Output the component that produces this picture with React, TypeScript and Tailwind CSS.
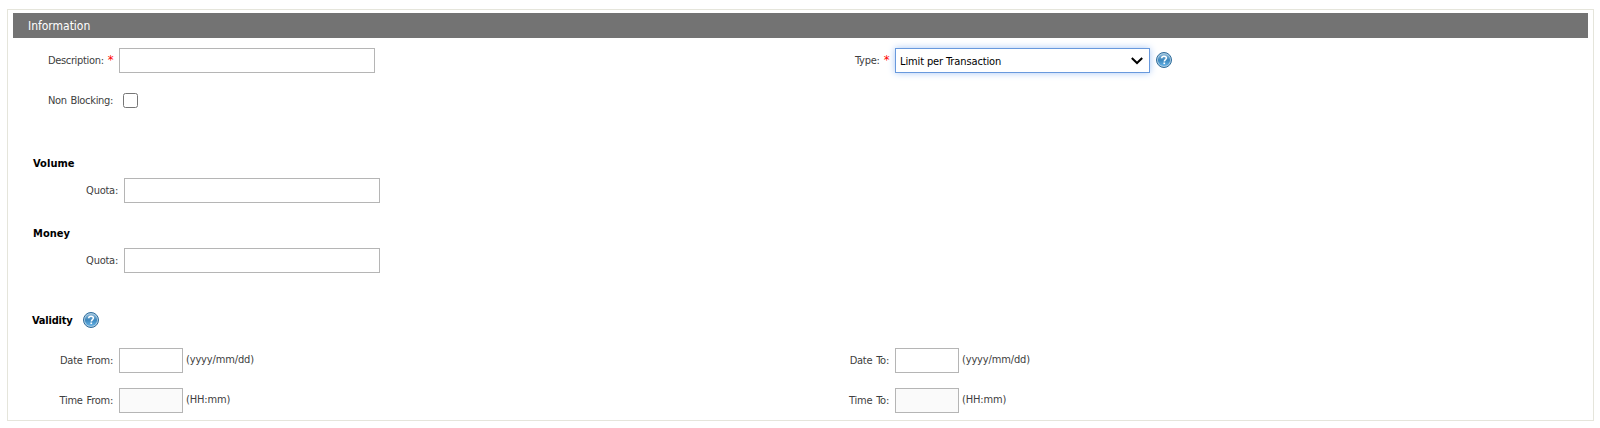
import type { ReactNode } from 'react';

function HelpIcon() {
  return (
    <svg width="16" height="16" viewBox="0 0 16 16" className="block shrink-0">
      <defs>
        <linearGradient id="help" x1="0" y1="0" x2="0" y2="1">
          <stop offset="0" stopColor="#8db9d8" />
          <stop offset="0.5" stopColor="#3c87bd" />
          <stop offset="1" stopColor="#62b1e6" />
        </linearGradient>
      </defs>
      <circle cx="8" cy="8" r="7.5" fill="#a9cbe2" stroke="#2f6c9b" />
      <circle cx="8" cy="8" r="6.1" fill="url(#help)" />
      <path d="M5.7 6.3C5.8 4.8 6.7 4.2 8 4.2c1.5 0 2.4.8 2.4 1.9C10.400 7.600 8.300 7.600 8.300 9.500" fill="none" stroke="#fff" strokeWidth="1.5" />
      <rect x="7.400" y="10.500" width="1.700" height="1.600" fill="#fff" />
    </svg>
  );
}

function Label({ className, children, required }: { className: string; children: ReactNode; required?: boolean }) {
  return (
    <div className={`flex shrink-0 justify-end whitespace-nowrap pr-1.5 leading-[25px] ${className}`}>
      {children}
      {required && <span className="ml-1 text-[13px] leading-[23px] tracking-[-0.5px] text-[#ff0000]">*</span>}
    </div>
  );
}

function Field({ className }: { className: string }) {
  return <input className={`block h-[25px] shrink-0 border border-[#b5b5b5] outline-none ${className}`} />;
}

function Range({ unit, labels, disabled }: { unit: string; labels: [string, string]; disabled?: boolean }) {
  const field = disabled ? 'w-16 bg-[#fafafa]' : 'w-16 bg-white';
  return (
    <div className="flex h-[25px]">
      <div className="flex w-[776px]">
        <Label className="w-[111px]">{labels[0]}</Label>
        <Field className={field} />
        <span className="ml-[3px] leading-6 tracking-[-0.15px]">{unit}</span>
      </div>
      <Label className="w-[111px]">{labels[1]}</Label>
      <Field className={field} />
      <span className="ml-[3px] leading-6 tracking-[-0.15px]">{unit}</span>
    </div>
  );
}

function Quota({ title }: { title: string }) {
  return (
    <section className="h-[70px]">
      <h3 className="ml-[25px] h-[25px] pt-1 text-[11px] leading-[14px] font-bold tracking-[0.05px] text-black">{title}</h3>
      <div className="flex">
        <Label className="w-[116px]">Quota:</Label>
        <Field className="w-64" />
      </div>
    </section>
  );
}

export default function App() {
  return (
    <main className="h-[428px] bg-white pt-[9px] pl-[7px] font-[family-name:'DejaVu_Sans',sans-serif] text-[11px] tracking-[-0.25px] text-[#404040] font-stretch-condensed [word-spacing:1px]">
      <div className="h-[412px] w-[1587px] border border-[#e5e5db] pt-[3px] pr-[5px]">
        <h2 className="ml-[5px] h-[25px] bg-[#737373] pl-[15px] text-[12px] leading-[26px] font-normal tracking-[-0.02px] text-white">Information</h2>
        <div className="mt-2.5 flex h-[25px]">
          <div className="flex w-[776px]">
            <Label className="w-[111px] tracking-[-0.33px]" required>Description:</Label>
            <Field className="w-64" />
          </div>
          <Label className="w-[111px]" required>Type:</Label>
          <button className="flex h-[25px] w-[255px] items-center justify-between border border-[#6899dd] bg-white pr-1.5 pl-1 text-black shadow-[0_0_7px_#a8c8f5]">
            <span className="pt-[3px] tracking-[-0.12px]">Limit per Transaction</span>
            <svg width="12" height="8" viewBox="0 0 12 8" fill="none" stroke="#000" strokeWidth="2"><path d="m.8 1 5.200 5 5.200-5" /></svg>
          </button>
          <div className="mt-1 ml-1.5"><HelpIcon /></div>
        </div>
        <div className="mt-[15px] flex h-[25px]">
          <Label className="w-[111px] tracking-[-0.32px]">Non Blocking:</Label>
          <input type="checkbox" className="mt-[5px] ml-1 h-[15px] w-[15px] appearance-none rounded-[2.5px] border border-[#767676]" />
        </div>
        <div className="mt-10">
          <Quota title="Volume" />
          <Quota title="Money" />
        </div>
        <div className="mt-[19px] ml-6 flex h-4 items-center">
          <h3 className="w-[51px] pt-0.5 text-[11px] font-bold tracking-[-0.2px] text-black">Validity</h3>
          <HelpIcon />
        </div>
        <div className="mt-5 flex flex-col gap-[15px]">
          <Range labels={['Date From:', 'Date To:']} unit="(yyyy/mm/dd)" />
          <Range labels={['Time From:', 'Time To:']} unit="(HH:mm)" disabled />
        </div>
      </div>
    </main>
  );
}
